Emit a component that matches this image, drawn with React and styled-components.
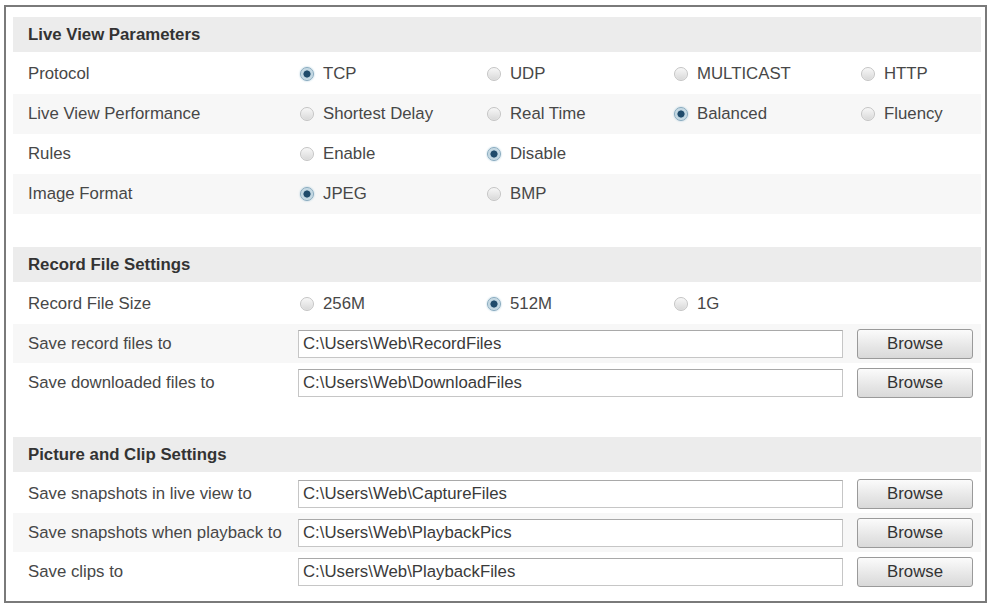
import styled, { createGlobalStyle } from 'styled-components';

const GlobalStyle = createGlobalStyle`
    html, body {
        margin: 0;
        padding: 0;
        background: #fff;
    }
    body {
        font-family: "Liberation Sans", Arial, sans-serif;
    }
`

const Frame = styled.div`
    box-sizing: border-box;
    margin: 5px 0 0 4px;
    width: 983px;
    height: 598px;
    border: 2px solid #7a7a7a;
    padding: 10px 4px 0 7px;
    display: flex;
    flex-direction: column;
    `
const Section = styled.section`
    display: flex;
    flex-direction: column;
    margin-bottom: ${p => p.$after}px;
    `
const SectionHeader = styled.div`
    height: 35px;
    background: #ececec;
    display: flex;
    align-items: center;
    padding-left: 15px;
    margin-bottom: 2px;
    font-size: 16.8px;
    font-weight: bold;
    color: #333;
    `
const Row = styled.div`
    display: grid;
    grid-template-columns: 285px ${p => p.$input ? '545px 130px' : 'repeat(3, 187px) 1fr'};
    align-items: center;
    height: ${p => p.$input ? 39 : 40}px;
    background: ${p => p.$shade ? '#f7f7f7' : 'transparent'};
    `
const Label = styled.div`
    padding-left: 15px;
    font-size: 16.8px;
    color: #474747;
    white-space: nowrap;
    `
const Option = styled.label`
    display: flex;
    align-items: center;
    gap: 9px;
    padding-left: 2px;
    font-size: 16.8px;
    color: #474747;
    `
const RadioDot = styled.span`
    flex: none;
    box-sizing: border-box;
    width: 14px;
    height: 14px;
    border-radius: 50%;
    border: 1px solid ${p => p.$on ? '#86a9bd' : '#c4c4c4'};
    background: ${p => p.$on
        ? 'radial-gradient(circle, #1f4b6b 0 3.2px, #bcd3df 3.9px, #e6eff4 100%)'
        : 'linear-gradient(#f7f7f7, #d8d8d8)'};
    box-shadow: ${p => p.$on ? '0 0 2px #9fc3d6' : 'inset 0 0 1px #fff'};
    `
const PathInput = styled.div`
    box-sizing: border-box;
    height: 28px;
    border: 1px solid #c6c6c6;
    border-top-color: #a9a9a9;
    display: flex;
    align-items: center;
    padding-left: 4px;
    font-size: 16.8px;
    color: #3a3a3a;
    background: #fff;
    `
const BrowseButton = styled.button`
    box-sizing: border-box;
    margin-left: 14px;
    width: 116px;
    height: 30px;
    border: 1px solid #9a9a9a;
    border-radius: 3px;
    background: linear-gradient(#fbfbfb, #e6e6e6 60%, #d9d9d9);
    font-family: "Liberation Sans", Arial, sans-serif;
    font-size: 16.8px;
    color: #333;
    padding: 0;
    `

const Radio = ({ text, on }) => (
    <Option><RadioDot $on={on} />{text}</Option>
)

const RadioRow = ({ label, options, selected, shade }) => (
    <Row $shade={shade}>
        <Label>{label}</Label>
        {options.map(o => <Radio key={o} text={o} on={o === selected} />)}
    </Row>
)

const PathRow = ({ label, path, shade }) => (
    <Row $input $shade={shade}>
        <Label>{label}</Label>
        <PathInput>{path}</PathInput>
        <BrowseButton>Browse</BrowseButton>
    </Row>
)

export default function App() {
    return (
        <>
            <GlobalStyle />
            <Frame>
                <Section $after={33}>
                    <SectionHeader>Live View Parameters</SectionHeader>
                    <RadioRow label="Protocol" options={['TCP', 'UDP', 'MULTICAST', 'HTTP']} selected="TCP" />
                    <RadioRow label="Live View Performance" options={['Shortest Delay', 'Real Time', 'Balanced', 'Fluency']} selected="Balanced" shade />
                    <RadioRow label="Rules" options={['Enable', 'Disable']} selected="Disable" />
                    <RadioRow label="Image Format" options={['JPEG', 'BMP']} selected="JPEG" shade />
                </Section>
                <Section $after={35}>
                    <SectionHeader>Record File Settings</SectionHeader>
                    <RadioRow label="Record File Size" options={['256M', '512M', '1G']} selected="512M" />
                    <PathRow label="Save record files to" path="C:\Users\Web\RecordFiles" shade />
                    <PathRow label="Save downloaded files to" path="C:\Users\Web\DownloadFiles" />
                </Section>
                <Section $after={0}>
                    <SectionHeader>Picture and Clip Settings</SectionHeader>
                    <PathRow label="Save snapshots in live view to" path="C:\Users\Web\CaptureFiles" />
                    <PathRow label="Save snapshots when playback to" path="C:\Users\Web\PlaybackPics" shade />
                    <PathRow label="Save clips to" path="C:\Users\Web\PlaybackFiles" />
                </Section>
            </Frame>
        </>
    )
}
